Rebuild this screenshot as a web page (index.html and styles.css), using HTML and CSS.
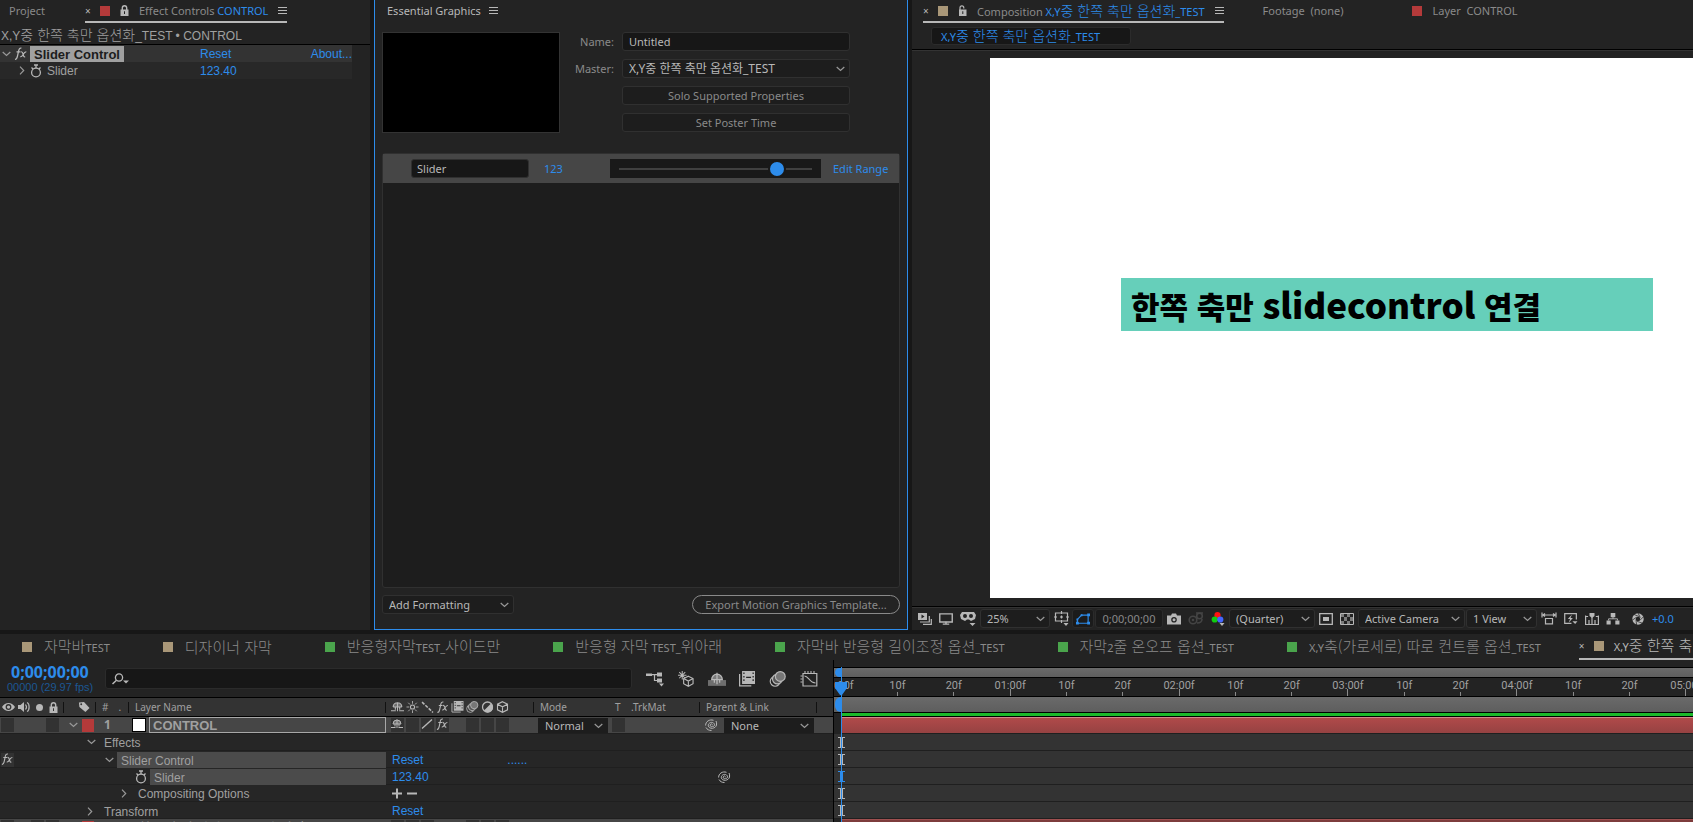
FILE: index.html
```html
<!DOCTYPE html>
<html lang="ko">
<head>
  <meta charset="UTF-8" />
  <meta name="viewport" content="width=device-width, initial-scale=1" />
  <title>X,Y중 한쪽 축만 옵션화_TEST</title>
  <link rel="stylesheet" href="styles.css">
</head>
<body>
  <!-- icon sprite -->
  <svg class="sprite" aria-hidden="true">
    <symbol id="i-menu" viewBox="0 0 9 8"><path d="M0 .5h9M0 3.5h9M0 6.5h9" stroke="currentColor" fill="none"/></symbol>
    <symbol id="i-lock" viewBox="0 0 9 11"><path d="M2.3 5V3a2.2 2.2 0 0 1 4.4 0v2" stroke="currentColor" stroke-width="1.4" fill="none"/><path fill="currentColor" fill-rule="evenodd" d="M.5 4.5h8V11h-8zM4 6.3v2.7h1V6.3z"/></symbol>
    <symbol id="i-unlock" viewBox="0 0 9 11"><path d="M2 5V2.8a1.900 1.900 0 0 1 3.800 0v.6" stroke="currentColor" stroke-width="1.2" fill="none"/><path fill="currentColor" fill-rule="evenodd" d="M1 4.500h7.500V11H1zM4.300 6.300v2.700h1V6.300z"/></symbol>
    <symbol id="i-down" viewBox="0 0 9 6"><path d="M.7 1l3.800 3.500L8.300 1" stroke="currentColor" stroke-width="1.2" fill="none"/></symbol>
    <symbol id="i-right" viewBox="0 0 6 9"><path d="M1 .7l3.700 3.800L1 8.300" stroke="currentColor" stroke-width="1.2" fill="none"/></symbol>
    <symbol id="i-watch" viewBox="0 0 12 14"><circle cx="6" cy="8.500" r="4.400" stroke="currentColor" stroke-width="1.300" fill="none"/><path d="M4 1h4M6 1v3M1.500 3.500l1.500 1.500M10.500 3.500L9 5" stroke="currentColor" stroke-width="1.300"/></symbol>
    <symbol id="i-fx" viewBox="0 0 13 13"><path d="M1 12.300c1.600.3 2-1 2.500-3.300l1.200-5.500C5.200 1.500 6 .8 7.400 1.200M2.500 4.800h4M7 4.800c1.500-.3 1.800 1 2.200 2.600.4 1.800.7 2.800 2 2.400M12.300 4.900c-1.500-.3-2.400 1.300-3.200 2.600-.7 1.300-1.400 2.500-2.900 2.200" stroke="currentColor" stroke-width="1.2" fill="none"/></symbol>
    <symbol id="i-eye" viewBox="0 0 12 8"><path fill="currentColor" fill-rule="evenodd" d="M0 4C3-.8 9-.8 12 4 9 8.800 3 8.800 0 4zM6 1.300a2.700 2.700 0 1 0 0 5.400 2.700 2.700 0 0 0 0-5.400z"/><circle cx="6" cy="4" r="1.500" fill="currentColor"/></symbol>
    <symbol id="i-speaker" viewBox="0 0 13 12"><path fill="currentColor" d="M0 4h2.500L6 1v10L2.500 8H0z"/><path d="M7.500 3.500c1.200 1.500 1.200 3.500 0 5M9 1.500c2.800 1 2.800 8 0 9" stroke="currentColor" stroke-width="1.2" fill="none"/></symbol>
    <symbol id="i-tag" viewBox="0 0 13 12"><path fill="currentColor" fill-rule="evenodd" d="M1 1l5.500-.5L12.500 7 8 11.500 1.500 6zM3.500 2a1 1 0 1 0 0 2 1 1 0 0 0 0-2z"/></symbol>
    <symbol id="i-shy" viewBox="0 0 12 11"><path d="M2 5.500a4 4 0 0 1 8 0z" fill="currentColor" opacity=".45"/><path d="M2 5.500a4 4 0 0 1 8 0M6 1v8.500M2 5.500h8M0 9h4.500M7.500 9H12M4 5.500V8M8 5.500V8" stroke="currentColor" fill="none"/></symbol>
    <symbol id="i-sun" viewBox="0 0 11 11"><circle cx="5.500" cy="5.500" r="1.900" fill="none" stroke="currentColor"/><path d="M5.500 0v2.500M5.500 8.500V11M0 5.500h2.500M8.500 5.500H11M1.600 1.600l1.700 1.700M7.700 7.700l1.700 1.700M1.600 9.400l1.700-1.700M7.700 3.300l1.700-1.700" stroke="currentColor" stroke-width=".8"/></symbol>
    <symbol id="i-quality" viewBox="0 0 11 11"><path d="M.5 1l10 9.500" stroke="currentColor" stroke-width="1.400" stroke-dasharray="3 1.2"/></symbol>
    <symbol id="i-slash" viewBox="0 0 12 11"><path d="M1 10L11 1" stroke="currentColor" stroke-width="1.400"/></symbol>
    <symbol id="i-film" viewBox="0 0 14 13"><path d="M1 2.500V12h9.500" stroke="currentColor" fill="none"/><path fill="currentColor" fill-rule="evenodd" d="M3 0h10.500v10.500H3zM4 1.200v1.300h1V1.200zM4 4v1.300h1V4zM4 6.800v1.300h1V6.800zM11.500 1.200v1.300h1V1.200zM11.500 4v1.300h1V4zM11.500 6.800v1.300h1V6.800zM6.300 4.600v1h4v-1z"/></symbol>
    <symbol id="i-blur" viewBox="0 0 15 14"><circle cx="5" cy="9" r="4.300" fill="none" stroke="currentColor"/><circle cx="7" cy="7" r="4.300" fill="#555" stroke="currentColor"/><circle cx="9.500" cy="4.800" r="4.300" fill="#777" stroke="currentColor"/></symbol>
    <symbol id="i-adjust" viewBox="0 0 12 12"><circle cx="6" cy="6" r="5" fill="none" stroke="currentColor" stroke-width="1.300"/><path fill="currentColor" d="M9.500 2.500A5 5 0 1 1 2.500 9.500z"/></symbol>
    <symbol id="i-cube" viewBox="0 0 12 12"><path d="M6 .7l5 2.500v5.600l-5 2.500-5-2.500V3.200zM1 3.200l5 2.600 5-2.600M6 5.800v5.500" stroke="currentColor" fill="none" stroke-width="1.100"/></symbol>
    <symbol id="i-spiral" viewBox="0 0 13 12"><path d="M7.500 5.500a1.300 1.300 0 1 0-.2 1.800c2 .6 2.700-1.300 1.900-2.600-1.800-2.600-6.200-1-5.900 2 .6 3.700 7.200 3.400 8.200-.7.300-1.500.1-3-.5-4M.6 6.500C.600 2.500 4.500 0 8.500 1.300M1 8.500c1 2 3 3 5.500 3" stroke="currentColor" fill="none"/></symbol>
    <symbol id="i-search" viewBox="0 0 17 12"><circle cx="7" cy="4.500" r="3.600" fill="none" stroke="currentColor" stroke-width="1.300"/><path d="M4.500 7.200L.5 11" stroke="currentColor" stroke-width="1.500"/><path d="M11 7.500h6l-3 3z" fill="currentColor"/></symbol>
    <symbol id="i-layers" viewBox="0 0 14 12"><path fill="currentColor" fill-rule="evenodd" d="M0 0h9v7H0zM3.500 1.500v4l3-2z"/><path d="M2 9h9.300V3M5 11.300h8.300V6" stroke="currentColor" fill="none" stroke-width="1.2"/></symbol>
    <symbol id="i-monitor" viewBox="0 0 13 11"><path d="M.7.7h11.600v7.600H.7z" stroke="currentColor" stroke-width="1.300" fill="none"/><path d="M6.500 8v2M3.500 10.300h6" stroke="currentColor" stroke-width="1.300"/></symbol>
    <symbol id="i-goggles" viewBox="0 0 16 15"><path fill="currentColor" fill-rule="evenodd" d="M2 1h12l2 3-1 4-4 2-2-1.500H7L5 10 1 8 0 4zM5 3a2 2 0 1 0 0 4 2 2 0 0 0 0-4zM11 3a2 2 0 1 0 0 4 2 2 0 0 0 0-4zM9.500 12h6l-3 3z"/></symbol>
    <symbol id="i-guides" viewBox="0 0 16 15"><path d="M1.500 2h12v8h-12zM7.500 0v3M7.500 9v3M0 6h3M12 6h3M6 6h3M7.500 4.500v3" stroke="currentColor" stroke-width="1.200" fill="none"/><path fill="currentColor" d="M9.500 12h5l-2.500 3z"/></symbol>
    <symbol id="i-mask" viewBox="0 0 15 12"><path d="M1.500 10.500V6.500L6 1.800h7v8.700z" stroke="currentColor" fill="none" stroke-width="1.200"/><path fill="currentColor" d="M0 9h3v3H0zM12 9h3v3h-3zM12 0h3v3h-3zM5 1h2v2H5zM.5 5.500h2v2h-2z"/></symbol>
    <symbol id="i-camera" viewBox="0 0 14 11"><path fill="currentColor" fill-rule="evenodd" d="M0 2h4l1-2h4l1 2h4v9H0zM7 3.500a2.800 2.800 0 1 0 0 5.600 2.800 2.800 0 0 0 0-5.600z"/><circle cx="7" cy="6.300" r="1.500" fill="currentColor"/></symbol>
    <symbol id="i-person" viewBox="0 0 16 13"><circle cx="5" cy="8" r="3.800" fill="none" stroke="currentColor" stroke-width="1.600"/><circle cx="5" cy="8" r="1.300" fill="currentColor"/><circle cx="11.500" cy="4" r="2.800" fill="none" stroke="currentColor" stroke-width="1.600"/><path d="M8 1l7 0M9 11c3 0 5-1 5-4" stroke="currentColor" stroke-width="1.600" fill="none"/></symbol>
    <symbol id="i-rgb" viewBox="0 0 13 14"><circle cx="6" cy="3.200" r="3.100" fill="#f11"/><circle cx="3.200" cy="7.500" r="3.100" fill="#1c1"/><circle cx="8.800" cy="7.500" r="3.100" fill="#46f"/><path fill="#b8b8b8" d="M8 11h5l-2.500 3z"/></symbol>
    <symbol id="i-roi" viewBox="0 0 14 12"><path d="M.7.7h12.600v10.600H.7z" fill="none" stroke="currentColor" stroke-width="1.300"/><path fill="currentColor" d="M4 4h6v4H4z"/></symbol>
    <symbol id="i-checker" viewBox="0 0 14 12"><path d="M.5.5h13v11H.5z" fill="none" stroke="currentColor"/><path fill="currentColor" d="M1 1h3v3H1zM7 1h3v3H7zM4 4h3v4H4zM10 4h3v4h-3zM1 8h3v3H1zM7 8h3v3H7z" opacity=".6"/></symbol>
    <symbol id="i-aspect" viewBox="0 0 16 12"><path d="M1 0v5M15 0v5M1 2.500h14M4 1L2 2.500 4 4M12 1l2 1.500L12 4M4.500 6h7v5.300h-7z" stroke="currentColor" stroke-width="1.200" fill="none"/></symbol>
    <symbol id="i-fast" viewBox="0 0 15 13"><path d="M13.300 7V.7H.7v10.600H8" stroke="currentColor" stroke-width="1.300" fill="none"/><path fill="currentColor" d="M8.500 1.500L4 6.500h2.500L5 10.500l4.500-5H7zM9 9h5.500L12 12z"/></symbol>
    <symbol id="i-timeline" viewBox="0 0 14 12"><path d="M.6 2.500v9h12.800v-9M.6 3.500h2.500M10.800 3.500h2.600M4 11V7M10 11V7M7 11V4" stroke="currentColor" stroke-width="1.200" fill="none"/><path fill="currentColor" d="M4.500 0h5v3L7 5 4.500 3z"/></symbol>
    <symbol id="i-flow" viewBox="0 0 14 13"><path fill="currentColor" d="M4.500 0h5v4.500h-5zM0 8h4.500v4.500H0zM9.500 8H14v4.500H9.500z"/><path d="M7 4v2.300M2.200 8V6.300h9.600V8" stroke="currentColor" fill="none"/></symbol>
    <symbol id="i-aperture" viewBox="0 0 13 13"><circle cx="6.500" cy="6.500" r="4.300" fill="none" stroke="currentColor" stroke-width="3.800"/><path d="M6.500 0l2.500 5M12.500 4L8.500 8M11 11L5.500 9M5 13L4.300 7M0 8l5-3.500M2 1.500L8 4" stroke="#232323" stroke-width=".8"/></symbol>
    <symbol id="i-miniflow" viewBox="0 0 18 15"><path fill="currentColor" d="M0 2h6v2.500H0zM11 1h5v4h-5zM11 7h5v4h-5zM13 12h5l-2.500 3z"/><path d="M5 3.200h7M8.500 3.200V9H12" stroke="currentColor" fill="none" stroke-width="1.200"/></symbol>
    <symbol id="i-draft" viewBox="0 0 18 17"><path d="M5 0v9M.5 4.500h9M1.800 1.300l6.400 6.400M8.200 1.300L1.800 7.700" stroke="currentColor" stroke-width="1.100"/><path d="M11.500 5.500l5 2.500v5.500l-5 2.700-5-2.700V8zM6.500 8l5 2.700 5-2.700M11.500 10.700v5.500" fill="#232323" stroke="currentColor" stroke-width="1.200"/></symbol>
    <symbol id="i-hide" viewBox="0 0 17 14"><path fill="#6e6e6e" d="M0 8h17v5.500H0z"/><path d="M3.500 7.500a5 5 0 0 1 10 0z" fill="currentColor" opacity=".6"/><path d="M3.500 7.500a5 5 0 0 1 10 0zM8.500 1v11M6 8v2.500M11 8v2.500" stroke="currentColor" stroke-width="1.200" fill="none"/></symbol>
    <symbol id="i-graph" viewBox="0 0 17 16"><path d="M2.500 2.500h13.800V15H2.500z" fill="none" stroke="currentColor" stroke-width="1.200"/><path d="M4.500 0v2M7.500 0v2M10.500 0v2M13.500 0v2M0 5h2M0 8h2M0 11h2M4 5c4 0 5 7 11 7" fill="none" stroke="currentColor" stroke-width="1.100"/></symbol>
    <symbol id="i-beam" viewBox="0 0 7 11"><path fill="currentColor" d="M0 0h7v1H5v9h2v1H0v-1h2V1H0z"/></symbol>
    <symbol id="i-head" viewBox="0 0 12 14"><path fill="currentColor" d="M0 0h12v6L7 13H5L0 6z"/></symbol>
  </svg>

  <div class="app">
    <main class="panels">
      <!-- Effect controls -->
      <section class="panel effects">
        <nav class="tabs">
          <a class="tab first" href="#">Project</a>
          <a class="tab current" href="#">
            <span class="close">×</span><i class="swatch red"></i>
            <svg class="ic lock"><use href="#i-lock"/></svg>
            <span>Effect Controls <b>CONTROL</b></span>
            <svg class="ic menu"><use href="#i-menu"/></svg>
          </a>
        </nav>
        <div class="source">X,Y<span class="ko">중 한쪽 축만 옵션화</span>_TEST • CONTROL</div>
        <div class="effect-row effect-name">
          <svg class="ic down"><use href="#i-down"/></svg>
          <svg class="ic fx"><use href="#i-fx"/></svg>
          <strong>Slider Control</strong>
          <a class="value" href="#">Reset</a>
          <a class="about" href="#">About...</a>
        </div>
        <div class="effect-row effect-prop">
          <svg class="ic right"><use href="#i-right"/></svg>
          <svg class="ic watch"><use href="#i-watch"/></svg>
          <span>Slider</span>
          <a class="value" href="#">123.40</a>
        </div>
      </section>

      <!-- Essential graphics -->
      <section class="panel graphics">
        <header class="graphics-title">Essential Graphics <svg class="ic menu"><use href="#i-menu"/></svg></header>
        <div class="setup">
          <div class="poster"></div>
          <div class="fields">
            <label for="name">Name:</label>
            <input id="name" type="text" value="Untitled">
            <label for="master">Master:</label>
            <span class="dropdown">
              <select id="master"><option>X,Y중 한쪽 축만 옵션화_TEST</option></select>
              <svg class="ic down"><use href="#i-down"/></svg>
            </span>
            <button type="button">Solo Supported Properties</button>
            <button type="button">Set Poster Time</button>
          </div>
        </div>
        <div class="props">
          <div class="prop">
            <input class="prop-name" type="text" value="Slider" aria-label="Property name">
            <span class="prop-value">123</span>
            <input class="range" type="range" min="0" max="144" value="123" aria-label="Slider">
            <a href="#">Edit Range</a>
          </div>
        </div>
        <footer class="graphics-foot">
          <span class="dropdown formatting">
            <select aria-label="Add Formatting"><option>Add Formatting</option></select>
            <svg class="ic down"><use href="#i-down"/></svg>
          </span>
          <button class="export" type="button">Export Motion Graphics Template...</button>
        </footer>
      </section>

      <!-- Composition viewer -->
      <section class="panel viewer">
        <nav class="tabs">
          <a class="tab current" href="#">
            <span class="close">×</span><i class="swatch tan"></i>
            <svg class="ic lock"><use href="#i-unlock"/></svg>
            <span>Composition <b>X,Y<span class="ko">중 한쪽 축만 옵션화</span>_TEST</b></span>
            <svg class="ic menu"><use href="#i-menu"/></svg>
          </a>
          <a class="tab footage" href="#">Footage&nbsp; (none)</a>
          <a class="tab layer-tab" href="#"><i class="swatch red"></i>Layer&nbsp; CONTROL</a>
        </nav>
        <div class="crumbs"><a href="#">X,Y<span class="ko">중 한쪽 축만 옵션화</span>_TEST</a></div>
        <div class="stage">
          <div class="canvas">
            <div class="caption">한쪽 축만 <span>slidecontrol</span> 연결</div>
          </div>
        </div>
        <div class="toolbar">
          <svg class="ic t14"><use href="#i-layers"/></svg>
          <svg class="ic t14"><use href="#i-monitor"/></svg>
          <svg class="ic t16"><use href="#i-goggles"/></svg>
          <span class="dropdown zoom">
            <select aria-label="Magnification"><option>25%</option></select>
            <svg class="ic down"><use href="#i-down"/></svg>
          </span>
          <svg class="ic t16"><use href="#i-guides"/></svg>
          <button class="toggle" type="button" aria-label="Mask visibility"><svg class="ic t14"><use href="#i-mask"/></svg></button>
          <button class="time" type="button">0;00;00;00</button>
          <svg class="ic t14"><use href="#i-camera"/></svg>
          <svg class="ic t16 off"><use href="#i-person"/></svg>
          <svg class="ic t14 tall"><use href="#i-rgb"/></svg>
          <span class="dropdown quality">
            <select aria-label="Resolution"><option>(Quarter)</option></select>
            <svg class="ic down"><use href="#i-down"/></svg>
          </span>
          <svg class="ic t14"><use href="#i-roi"/></svg>
          <svg class="ic t14"><use href="#i-checker"/></svg>
          <span class="dropdown cam">
            <select aria-label="3D view"><option>Active Camera</option></select>
            <svg class="ic down"><use href="#i-down"/></svg>
          </span>
          <span class="dropdown views">
            <select aria-label="View layout"><option>1 View</option></select>
            <svg class="ic down"><use href="#i-down"/></svg>
          </span>
          <svg class="ic t16"><use href="#i-aspect"/></svg>
          <svg class="ic t14"><use href="#i-fast"/></svg>
          <svg class="ic t14"><use href="#i-timeline"/></svg>
          <svg class="ic t14"><use href="#i-flow"/></svg>
          <svg class="ic t14 exposure"><use href="#i-aperture"/></svg>
          <a href="#">+0.0</a>
        </div>
      </section>
    </main>

    <!-- Timeline -->
    <section class="timeline">
      <nav class="comp-tabs">
        <a href="#"><i class="swatch tan"></i><span><span class="ko">자막바</span>TEST</span></a>
        <a href="#"><i class="swatch tan"></i><span class="ko">디자이너 자막</span></a>
        <a href="#"><i class="swatch green"></i><span><span class="ko">반응형자막</span>TEST_<span class="ko">사이드만</span></span></a>
        <a href="#"><i class="swatch green"></i><span><span class="ko">반응형 자막</span> TEST_<span class="ko">위아래</span></span></a>
        <a href="#"><i class="swatch green"></i><span><span class="ko">자막바 반응형 길이조정 옵션</span>_TEST</span></a>
        <a href="#"><i class="swatch green"></i><span><span class="ko">자막</span>2<span class="ko">줄 온오프 옵션</span>_TEST</span></a>
        <a href="#"><i class="swatch green"></i><span>X,Y<span class="ko">축(가로세로) 따로 컨트롤 옵션</span>_TEST</span></a>
        <a class="open" href="#"><span class="close">×</span><i class="swatch tan"></i><span>X,Y<span class="ko">중 한쪽 축만 옵션화</span>_TEST</span></a>
      </nav>

      <div class="split">
        <div class="outline">
          <div class="controls">
            <div class="clock"><b>0;00;00;00</b><small>00000 (29.97 fps)</small></div>
            <div class="search">
              <svg class="ic"><use href="#i-search"/></svg>
              <input type="text" aria-label="Search layers">
            </div>
            <div class="tools">
              <svg class="ic"><use href="#i-miniflow"/></svg>
              <svg class="ic"><use href="#i-draft"/></svg>
              <svg class="ic"><use href="#i-hide"/></svg>
              <svg class="ic"><use href="#i-film"/></svg>
              <svg class="ic"><use href="#i-blur"/></svg>
              <svg class="ic"><use href="#i-graph"/></svg>
            </div>
          </div>

          <div class="row head">
            <div class="av">
              <svg class="ic"><use href="#i-eye"/></svg>
              <svg class="ic"><use href="#i-speaker"/></svg>
              <i class="solo"></i>
              <svg class="ic lock"><use href="#i-lock"/></svg>
            </div>
            <div class="label"><svg class="ic"><use href="#i-tag"/></svg></div>
            <div class="num"><i>#</i><span>.</span></div>
            <div class="name">Layer Name</div>
            <div class="switches">
              <svg class="ic"><use href="#i-shy"/></svg>
              <svg class="ic"><use href="#i-sun"/></svg>
              <svg class="ic"><use href="#i-quality"/></svg>
              <svg class="ic"><use href="#i-fx"/></svg>
              <svg class="ic"><use href="#i-film"/></svg>
              <svg class="ic"><use href="#i-blur"/></svg>
              <svg class="ic"><use href="#i-adjust"/></svg>
              <svg class="ic"><use href="#i-cube"/></svg>
            </div>
            <div class="mode">Mode</div>
            <div class="matte">T</div>
            <div class="trk">.TrkMat</div>
            <div class="parent">Parent &amp; Link</div>
            <div class="end"></div>
          </div>

          <div class="row layer">
            <div class="av"><i class="box"></i><i></i><i></i><i class="box"></i></div>
            <div class="label"><svg class="ic down"><use href="#i-down"/></svg><i class="chip"></i></div>
            <div class="num">1</div>
            <div class="name"><i class="solid"></i><b>CONTROL</b></div>
            <div class="switches">
              <i class="box"><svg class="ic"><use href="#i-shy"/></svg></i>
              <i class="box"></i>
              <i class="box"><svg class="ic"><use href="#i-slash"/></svg></i>
              <i class="box"><svg class="ic"><use href="#i-fx"/></svg></i>
              <i></i>
              <i class="box"></i><i class="box"></i><i class="box"></i>
            </div>
            <div class="mode">
              <span class="dropdown flat">
                <select aria-label="Blend mode"><option>Normal</option></select>
                <svg class="ic down"><use href="#i-down"/></svg>
              </span>
            </div>
            <div class="matte"><i class="box"></i></div>
            <div class="trk"></div>
            <div class="parent">
              <svg class="ic spiral"><use href="#i-spiral"/></svg>
              <span class="dropdown flat">
                <select aria-label="Parent"><option>None</option></select>
                <svg class="ic down"><use href="#i-down"/></svg>
              </span>
            </div>
            <div class="end"></div>
          </div>

          <div class="row sub">
            <div class="av"></div>
            <div class="tree lvl1"><svg class="ic down"><use href="#i-down"/></svg><span>Effects</span></div>
          </div>
          <div class="row sub">
            <div class="av"><i class="box"><svg class="ic"><use href="#i-fx"/></svg></i></div>
            <div class="tree lvl2"><svg class="ic down"><use href="#i-down"/></svg><span class="picked">Slider Control</span></div>
            <div class="val"><a href="#">Reset</a><a class="dots" href="#">......</a></div>
          </div>
          <div class="row sub">
            <div class="av"></div>
            <div class="tree lvl3"><svg class="ic watch"><use href="#i-watch"/></svg><span class="picked">Slider</span></div>
            <div class="val"><a href="#">123.40</a></div>
            <div class="pick"><svg class="ic spiral"><use href="#i-spiral"/></svg></div>
          </div>
          <div class="row sub">
            <div class="av"></div>
            <div class="tree lvl4"><svg class="ic right"><use href="#i-right"/></svg><span>Compositing Options</span></div>
            <div class="val"><svg class="ic plus" viewBox="0 0 26 11"><path d="M0 5.500h10M5 .5v10M15 5.500h10" stroke="currentColor" stroke-width="2"/></svg></div>
          </div>
          <div class="row sub">
            <div class="av"></div>
            <div class="tree lvl1"><svg class="ic right"><use href="#i-right"/></svg><span>Transform</span></div>
            <div class="val"><a href="#">Reset</a></div>
          </div>
          <div class="row layer next">
            <div class="av"><i class="box"></i><i></i><i class="box"></i><i class="box"></i></div>
            <div class="label"><svg class="ic down"></svg><i class="chip"></i></div>
            <div class="num"></div>
            <div class="name"><b>한쪽 축만 slidecontrol 연결</b></div>
            <div class="switches">
              <i class="box"></i><i class="box"></i><i class="box"></i><i></i><i></i>
              <i class="box"></i><i class="box"></i><i class="box"></i>
            </div>
          </div>
        </div>

        <div class="tracks">
          <div class="navigator"><i></i></div>
          <div class="ruler">
            <div class="ticks">
              <span class="major">0:00f</span><span>10f</span><span>20f</span>
              <span class="major">01:00f</span><span>10f</span><span>20f</span>
              <span class="major">02:00f</span><span>10f</span><span>20f</span>
              <span class="major">03:00f</span><span>10f</span><span>20f</span>
              <span class="major">04:00f</span><span>10f</span><span>20f</span>
              <span class="major">05:00f</span>
            </div>
          </div>
          <div class="workarea"><i></i></div>
          <div class="cache"></div>
          <div class="track bar"></div>
          <div class="track"><svg class="ic"><use href="#i-beam"/></svg></div>
          <div class="track"><svg class="ic"><use href="#i-beam"/></svg></div>
          <div class="track on"><svg class="ic"><use href="#i-beam"/></svg></div>
          <div class="track"><svg class="ic"><use href="#i-beam"/></svg></div>
          <div class="track"><svg class="ic"><use href="#i-beam"/></svg></div>
          <div class="track bar dim"></div>
          <div class="playhead"><svg class="ic"><use href="#i-head"/></svg></div>
        </div>
      </div>
    </section>
  </div>
</body>
</html>
```

FILE: styles.css
```css
* {
  box-sizing: border-box;
}

body {
  margin: 0;
  background: #171717;
  color: #a0a0a0;
  font-family: "Noto Sans", "Noto Sans CJK KR", sans-serif;
  font-size: 11px;
  line-height: 16px;
}

a {
  color: #2d8ceb;
  text-decoration: none;
}

i {
  font-style: normal;
}

input,
select,
button {
  font: inherit;
  color: inherit;
  margin: 0;
}

.sprite {
  display: none;
}

.ic {
  display: block;
  flex: none;
  width: 12px;
  height: 12px;
  color: #b8b8b8;
}

.ic.menu { width: 9px; height: 8px; }
.ic.lock { width: 9px; height: 11px; }
.ic.down { width: 9px; height: 6px; color: #999; }
.ic.right { width: 6px; height: 9px; color: #999; }
.ic.watch { width: 12px; height: 14px; }
.ic.fx { width: 13px; height: 13px; }
.ic.spiral { width: 13px; height: 12px; }

.ko {
  font-family: "Noto Sans CJK KR", sans-serif;
  font-size: 14px;
  font-weight: 300;
}

.swatch {
  flex: none;
  width: 10px;
  height: 10px;
}

.red { background: #b43a3a; }
.tan { background: #a99778; }
.green { background: #4aa44c; }

.app {
  display: flex;
  flex-direction: column;
  gap: 4px;
  height: 100vh;
  overflow: hidden;
}

.panels {
  flex: 1;
  min-height: 0;
  display: grid;
  grid-template-columns: minmax(0, 370fr) minmax(0, 534fr) minmax(0, 781fr);
  gap: 4px;
}

.panel {
  display: flex;
  flex-direction: column;
  min-height: 0;
  background: #232323;
  overflow: hidden;
}

/* panel tabs */
.tabs {
  display: flex;
  flex: none;
  height: 24px;
  white-space: nowrap;
}

.tab {
  display: flex;
  align-items: center;
  height: 23px;
  padding-bottom: 2px;
  color: #8a8a8a;
}

.tab b {
  color: #2d8ceb;
  font-weight: 400;
}

.tab.first {
  width: 85px;
  padding-left: 9px;
}

.tab.current {
  gap: 10px;
  padding-bottom: 0;
  border-bottom: 2px solid #b8b8b8;
}

.close {
  width: 5px;
  font-size: 10px;
  color: #b8b8b8;
}

/* effect controls */
.source {
  height: 21px;
  padding-left: 1px;
  border-bottom: 1px solid #000;
  font-family: "Liberation Sans", sans-serif;
  font-size: 12px;
  line-height: 20px;
  white-space: nowrap;
}

.effect-row {
  display: flex;
  align-items: center;
  height: 17px;
  margin-right: 18px;
  position: relative;
  background: #282828;
  font: 12px/18px "Liberation Sans", sans-serif;
}

.effect-name {
  background: #333;
  padding-left: 2px;
  gap: 3px;
}

.effect-name strong {
  height: 16px;
  padding: 0 4px;
  background: #a0a0a0;
  color: #1c1c1c;
  font-size: 13px;
}

.effect-prop {
  padding-left: 19px;
  gap: 5px;
}

.effect-row .value {
  position: absolute;
  left: 200px;
}

.about {
  margin-left: auto;
}

/* essential graphics */
.graphics {
  padding: 0 7px 15px;
  border: 1px solid #2d8ceb;
  border-top: 0;
}

.graphics-title {
  display: flex;
  align-items: center;
  gap: 8px;
  height: 23px;
  padding: 0 0 2px 5px;
  color: #b8b8b8;
}

.setup {
  display: flex;
  margin-top: 9px;
}

.poster {
  width: 178px;
  height: 101px;
  background: #000;
  border: 1px solid #333;
}

.fields {
  display: grid;
  grid-template-columns: 54px 228px;
  grid-auto-rows: 19px;
  gap: 8px;
  color: #8a8a8a;
}

.fields label {
  text-align: right;
  line-height: 20px;
}

.fields button {
  grid-column: 2;
}

.panel input[type="text"],
.panel select,
.fields button {
  width: 100%;
  height: 19px;
  padding: 0 6px;
  background: #171717;
  border: 1px solid #303030;
  border-radius: 3px;
  color: #b8b8b8;
}

.panel select,
.fields button {
  background: #1d1d1d;
}

.fields button {
  color: #8a8a8a;
}

.panel #master {
  font-size: 12px;
  line-height: 16px;
}

.dropdown {
  position: relative;
  display: block;
}

.dropdown select {
  display: block;
  appearance: none;
}

.dropdown .ic {
  position: absolute;
  right: 5px;
  top: 7px;
  pointer-events: none;
}

.props {
  flex: 1;
  margin-top: 20px;
  border: 1px solid #303030;
  border-radius: 3px;
  background: #1d1d1d;
}

.prop {
  display: flex;
  align-items: center;
  height: 29px;
  padding-left: 28px;
  background: #464646;
  white-space: nowrap;
}

.panel .prop .prop-name {
  flex: none;
  width: 118px;
  padding: 0 5px;
}

.prop-value {
  flex: none;
  width: 81px;
  padding-left: 15px;
  color: #2d8ceb;
}

.range {
  appearance: none;
  flex: none;
  width: 211px;
  height: 19px;
  padding: 0 9px;
  background: #191919;
}

.range::-webkit-slider-runnable-track {
  height: 2px;
  background: #404040;
}

.range::-webkit-slider-thumb {
  appearance: none;
  width: 18px;
  height: 18px;
  margin-top: -8px;
  border: 2px solid #191919;
  border-radius: 50%;
  background: #2d8ceb;
}

.prop a {
  margin-left: 12px;
}

.graphics-foot {
  display: flex;
  justify-content: space-between;
  margin-top: 7px;
}

.formatting {
  width: 132px;
}

.export {
  width: 208px;
  height: 19px;
  padding: 0;
  background: none;
  border: 1px solid #8a8a8a;
  border-radius: 10px;
  color: #8a8a8a;
  white-space: nowrap;
}

/* composition viewer */
.viewer .tabs {
  padding-left: 11px;
}

.footage {
  margin-left: 39px;
}

.layer-tab {
  gap: 11px;
  margin-left: 68px;
}

.crumbs {
  padding: 3px 19px 4px;
  border-bottom: 1px solid #000;
}

.crumbs a {
  display: block;
  width: 200px;
  height: 18px;
  padding-left: 9px;
  background: #171717;
  border: 1px solid #2b2b2b;
  border-radius: 3px;
  line-height: 14px;
  white-space: nowrap;
}

.stage {
  flex: 1;
  display: flex;
  min-height: 0;
  padding: 7px 0 8px 78px;
  border-top: 1px solid #333;
}

.canvas {
  flex: 1;
  display: flex;
  align-items: center;
  padding: 0 40px 0 131px;
  background: #fff;
}

.caption {
  flex: 1;
  height: 53px;
  margin-bottom: 47px;
  padding-left: 10px;
  background: #66cfba;
  color: #000;
  font: 900 31px/52px "Noto Sans CJK KR", sans-serif;
  white-space: nowrap;
}

.caption span {
  font-size: 35px;
}

.toolbar {
  display: flex;
  align-items: center;
  gap: 7px;
  height: 24px;
  padding: 0 6px;
  border-top: 1px solid #000;
  box-shadow: inset 0 1px #333;
}

.ic.t14 { width: 14px; height: 12px; }
.ic.t16 { width: 16px; height: 15px; }
.ic.tall { height: 14px; }

.ic.off {
  color: #444;
}

.toggle,
.time {
  height: 19px;
  padding: 0 3px;
  background: #1b1b1b;
  border: 1px solid #2b2b2b;
  border-radius: 3px;
  color: #8a8a8a;
}

.toggle {
  margin-left: -5px;
}

.toggle .ic {
  color: #2d8ceb;
}

.time {
  width: 68px;
  margin: 0 -3px 0 -6px;
}

.toolbar .dropdown {
  flex: none;
  margin: 0 -3px;
}

.zoom { width: 70px; }
.quality { width: 86px; }
.cam { width: 107px; }
.views { width: 71px; }

.exposure {
  margin-left: 4px;
}

/* timeline */
.timeline {
  flex: none;
  height: 188px;
  background: #232323;
}

.comp-tabs {
  display: flex;
  gap: 38px;
  height: 26px;
  padding-left: 7px;
  overflow: hidden;
  white-space: nowrap;
}

.comp-tabs a {
  display: flex;
  flex: none;
  align-items: center;
  gap: 12px;
  padding-left: 15px;
  color: #8a8a8a;
}

.comp-tabs .ko {
  font-size: 15px;
}

.comp-tabs .open {
  gap: 10px;
  padding-left: 0;
  border-bottom: 2px solid #b8b8b8;
  color: #b8b8b8;
}

.split {
  display: grid;
  grid-template-columns: 834px minmax(0, 1fr);
  height: 162px;
  overflow: hidden;
}

.outline {
  border-right: 1px solid #000;
}

.controls {
  display: flex;
  align-items: center;
  height: 37px;
}

.clock {
  width: 105px;
  padding-left: 7px;
  color: #2d8ceb;
}

.clock b,
.clock small {
  display: block;
}

.clock b {
  padding-left: 4px;
  font-size: 16px;
  line-height: 18px;
}

.clock small {
  color: #1c5793;
  font: 11px/13px "Liberation Sans", sans-serif;
}

.search {
  display: flex;
  align-items: center;
  width: 527px;
  height: 21px;
  padding-left: 6px;
  background: #171717;
  border: 1px solid #2b2b2b;
  border-radius: 3px;
}

.search .ic {
  width: 17px;
}

.search input {
  flex: 1;
  background: none;
  border: 0;
  outline: 0;
}

.tools {
  display: flex;
  flex: 1;
  justify-content: space-between;
  padding: 0 15px 0 14px;
}

.tools .ic {
  width: 18px;
  height: 16px;
}

.row {
  display: grid;
  grid-template-columns: 64px 32px 33px 257px 148px 76px 18px 72px 117px 16px;
  height: 17px;
  border-bottom: 1px solid #1f1f1f;
  background: #262626;
}

.row > div {
  display: flex;
  align-items: center;
  min-width: 0;
}

.head {
  height: 20px;
  background: #333;
  border-top: 1px solid #000;
  border-bottom-color: #000;
  font-size: 10px;
  line-height: 18px;
}

.head .av,
.head .label,
.head .num,
.head .name,
.head .switches,
.head .trk,
.head .parent {
  background: linear-gradient(#111, #111) right center / 1px 11px no-repeat;
}

.av {
  gap: 2px;
  padding-left: 1px;
}

.av > * {
  width: 13px;
}

.head .av {
  gap: 3px;
  padding-left: 2px;
}

.head .av .solo {
  flex: none;
  width: 7px;
  height: 7px;
  margin: 0 3px 0 2px;
  border-radius: 50%;
  background: #b8b8b8;
}

.head .label {
  padding-left: 14px;
}

.head .num {
  gap: 10px;
  padding-left: 6px;
}

.name {
  padding-left: 6px;
}

.switches {
  gap: 2px;
  padding-left: 5px;
}

.switches > * {
  width: 13px;
}

.mode,
.parent {
  padding-left: 6px;
}

.matte {
  padding-left: 5px;
}

.trk {
  padding-left: 3px;
}

.layer {
  background: #464646;
  font-size: 12px;
}

.box {
  display: block;
  height: 14px;
  background: #323232;
}

.layer .label {
  gap: 4px;
  padding-left: 5px;
}

.chip {
  width: 12px;
  height: 13px;
  background: #b43a3a;
}

.layer .num {
  padding-left: 8px;
  font-weight: 700;
}

.layer .name {
  gap: 3px;
  padding-left: 3px;
}

.solid {
  width: 14px;
  height: 14px;
  background: #fff;
  border: 1px solid #000;
}

.layer .name b {
  flex: 1;
  height: 16px;
  padding-left: 3px;
  border: 1px solid #a8a8a8;
  font: bold 13px/16px "Liberation Sans", sans-serif;
  overflow: hidden;
}

.flat {
  width: 70px;
}

.flat select {
  width: 100%;
  height: 15px;
  padding: 0 7px;
  border: 0;
  background: #1d1d1d;
  color: #b8b8b8;
  font-size: 11px;
}

.flat .ic {
  top: 5px;
}

.layer .mode {
  padding-left: 4px;
}

.layer .matte {
  padding-left: 2px;
}

.matte .box {
  width: 13px;
}

.layer .parent {
  gap: 6px;
  padding-left: 5px;
}

.parent .flat {
  width: 90px;
}

.sub {
  font: 12px/18px "Liberation Sans", sans-serif;
}

.tree {
  grid-column: 2 / 5;
}

.tree span {
  height: 16px;
}

.lvl1 { gap: 8px; padding-left: 23px; }
.lvl2 { gap: 3px; padding-left: 41px; }
.lvl3 { gap: 3px; padding-left: 71px; }
.lvl4 { gap: 11px; padding-left: 57px; }

.lvl1 .right {
  margin-right: 3px;
}

.picked {
  flex: 1;
  padding-left: 4px;
  background: #4b4b4b;
}

.sub .val {
  grid-column: 5;
  padding-left: 6px;
}

.dots {
  margin-left: 84px;
  white-space: nowrap;
}

.ic.plus {
  width: 26px;
  height: 11px;
}

.pick {
  grid-column: 9;
  padding-left: 18px;
}

.layer.next .name b {
  padding-left: 6px;
  border: 0;
  font: 400 14px/16px "Noto Sans CJK KR", sans-serif;
  overflow: visible;
  white-space: nowrap;
}

/* time ruler and tracks */
.tracks {
  position: relative;
  padding-top: 7px;
}

.navigator,
.workarea {
  padding-left: 1px;
  border: 1px solid #000;
  border-width: 1px 0;
  background: linear-gradient(#6a6a6a, #5e5e5e);
}

.navigator {
  height: 11px;
}

.navigator i,
.workarea i {
  display: block;
  width: 7px;
  height: 100%;
  border-radius: 6px 0 0 6px;
  background: #2d8ceb;
}

.ruler {
  height: 18px;
  overflow: hidden;
}

.ticks {
  display: grid;
  grid-template-columns: repeat(16, 1fr);
  margin: 0 -21px;
  font: 11px/15px Roboto, sans-serif;
  text-align: center;
}

.ticks span {
  height: 18px;
  background: linear-gradient(#8a8a8a, #8a8a8a) center bottom / 1px 4px no-repeat;
}

.ticks .major {
  background-size: 1px 7px;
}

.workarea {
  height: 17px;
}

.cache {
  height: 4px;
  margin-left: 7px;
  background: #1bb92a;
  border-bottom: 1px solid #000;
}

.track {
  display: flex;
  align-items: center;
  height: 17px;
  padding-left: 4px;
  border-bottom: 1px solid #1f1f1f;
  background: #333;
}

.track .ic {
  width: 7px;
  height: 11px;
}

.track.on .ic {
  color: #2d8ceb;
}

.track.bar {
  margin-left: 7px;
  border-top: 1px solid #d08a8a;
  background: linear-gradient(#b04a4a, #964242);
}

.track.dim {
  border-top-color: #a05050;
  background: #7d3c3c;
}

.playhead {
  position: absolute;
  left: 7px;
  top: 7px;
  bottom: 0;
  width: 1px;
  background: #2d8ceb;
}

.playhead .ic {
  width: 12px;
  height: 14px;
  margin: 15px 0 0 -6px;
  color: #2d8ceb;
}
```
